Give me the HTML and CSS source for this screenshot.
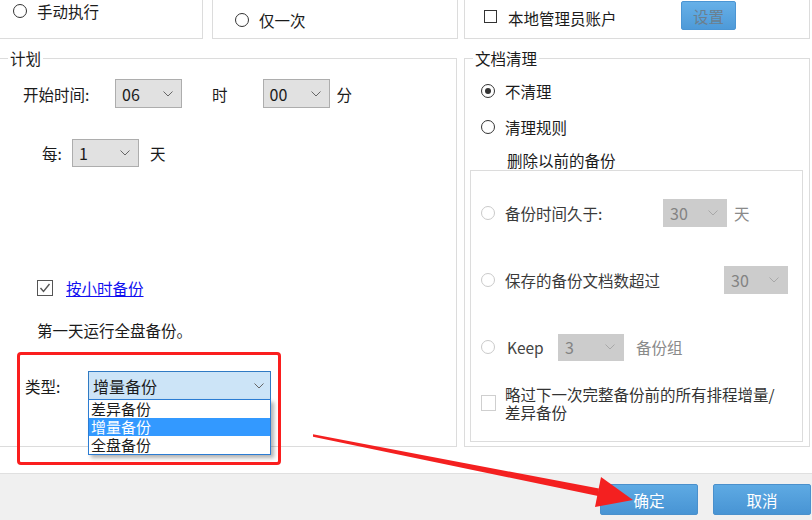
FILE: index.html
```html
<!DOCTYPE html>
<html lang="zh-CN">
  <head>
    <meta charset="UTF-8" />
    <title>计划备份设置</title>
    <link rel="stylesheet" href="styles.css">
  </head>
  <body>
    <!-- 上面一排: 执行方式 / 账户 -->
    <div class="top-row">
      <div class="box box-run">
        <div class="opt"><span class="radio"></span><span class="opt-text">手动执行</span></div>
      </div>
      <div class="box box-once">
        <div class="opt"><span class="radio"></span><span class="opt-text">仅一次</span></div>
      </div>
      <div class="box box-account">
        <span class="check"></span>
        <span class="account-text">本地管理员账户</span>
        <button class="btn-set">设置</button>
      </div>
    </div>

    <div class="main-row">
      <!-- 计划 -->
      <fieldset class="group plan">
        <legend>计划</legend>
        <div class="row row-start">
          <span class="lbl-start">开始时间:</span>
          <div class="select"><span>06</span><svg class="chev" width="10" height="6" viewBox="0 0 10 6"><polyline points="0.5,0.5 5,5 9.5,0.5" /></svg></div>
          <span class="unit-hour">时</span>
          <div class="select sel-min"><span>00</span><svg class="chev" width="10" height="6" viewBox="0 0 10 6"><polyline points="0.5,0.5 5,5 9.5,0.5" /></svg></div>
          <span class="unit-min">分</span>
        </div>
        <div class="row row-every">
          <span class="lbl-every">每:</span>
          <div class="select sel-every"><span>1</span><svg class="chev" width="10" height="6" viewBox="0 0 10 6"><polyline points="0.5,0.5 5,5 9.5,0.5" /></svg></div>
          <span class="unit-day">天</span>
        </div>
        <div class="row row-hourly">
          <span class="check check-on"><svg width="14" height="14" viewBox="0 0 14 14"><polyline points="2.5,7 5.5,10.5 11.5,3" /></svg></span>
          <a class="hourly-link" href="#">按小时备份</a>
        </div>
        <div class="row row-note">第一天运行全盘备份。</div>
        <div class="row row-type">
          <span class="lbl-type">类型:</span>
          <div class="type-wrap">
            <div class="select sel-type"><span>增量备份</span><svg class="chev" width="10" height="6" viewBox="0 0 10 6"><polyline points="0.5,0.5 5,5 9.5,0.5" /></svg></div>
            <ul class="dropdown">
              <li>差异备份</li>
              <li class="active">增量备份</li>
              <li>全盘备份</li>
            </ul>
          </div>
        </div>
      </fieldset>

      <!-- 文档清理 -->
      <fieldset class="group cleanup">
        <legend>文档清理</legend>
        <div class="row row-keepall"><span class="radio radio-on"></span><span class="opt-text">不清理</span></div>
        <div class="row row-rule"><span class="radio"></span><span class="opt-text">清理规则</span></div>
        <div class="row row-desc">删除以前的备份</div>
        <div class="rule-box">
          <div class="row rule rule-age">
            <span class="radio radio-off"></span>
            <span class="rule-text age-text">备份时间久于:</span>
            <div class="select select-off"><span>30</span><svg class="chev" width="10" height="6" viewBox="0 0 10 6"><polyline points="0.5,0.5 5,5 9.5,0.5" /></svg></div>
            <span class="unit-off">天</span>
          </div>
          <div class="row rule rule-count">
            <span class="radio radio-off"></span>
            <span class="rule-text count-text">保存的备份文档数超过</span>
            <div class="select select-off"><span>30</span><svg class="chev" width="10" height="6" viewBox="0 0 10 6"><polyline points="0.5,0.5 5,5 9.5,0.5" /></svg></div>
          </div>
          <div class="row rule rule-keep">
            <span class="radio radio-off"></span>
            <span class="rule-text keep-text">Keep</span>
            <div class="select select-off sel-keep"><span>3</span><svg class="chev" width="10" height="6" viewBox="0 0 10 6"><polyline points="0.5,0.5 5,5 9.5,0.5" /></svg></div>
            <span class="unit-off unit-group">备份组</span>
          </div>
          <div class="row rule rule-skip">
            <span class="check check-off"></span>
            <span class="skip-text">略过下一次完整备份前的所有排程增量/<br>差异备份</span>
          </div>
        </div>
      </fieldset>
    </div>

    <div class="footer">
      <button class="btn">确定</button>
      <button class="btn">取消</button>
    </div>

    <!-- 标注: 红框和箭头 -->
    <div class="mark-box"></div>
    <svg class="mark-arrow" width="812" height="520" viewBox="0 0 812 520">
      <polygon points="313,434.3 313,436.8 598,496 599,488.5" />
      <polygon points="633,500 595,507 601,477" />
    </svg>
  </body>
</html>
```

FILE: styles.css
```css
* {
  box-sizing: border-box;
}

body {
  margin: 0;
  width: 812px;
  height: 520px;
  overflow: hidden;
  position: relative;
  background: #fff;
  font-family: "Noto Sans CJK SC", "Noto Sans", sans-serif;
  font-size: 15.5px;
  line-height: 20px;
  color: #1b1b1b;
}

/* Top boxes */
.top-row {
  display: flex;
  margin-top: -20px;
  height: 59px;
}

.box {
  border: 1px solid #dcdcdc;
  height: 59px;
}

.box-run {
  margin-left: -1px;
  width: 204px;
  padding: 20px 0 0 13px;
}

.box-once {
  margin-left: 9px;
  width: 246px;
  padding: 29px 0 0 22px;
}

.box-account {
  margin-left: 6px;
  width: 346px;
  padding: 20px 0 0 19px;
  display: flex;
  align-items: flex-start;
}

.box-account .check {
  margin-top: 9px;
}

.account-text {
  width: 173px;
  margin-left: 11px;
  margin-top: 7px;
}

.opt {
  display: flex;
  align-items: center;
  height: 20px;
}

.opt-text {
  margin-left: 10px;
}

.btn-set {
  width: 55px;
  height: 29px;
  border: 1px solid #4b95d3;
  border-radius: 2px;
  background: linear-gradient(#66b0e8, #4e9ad8);
  color: #6b7f8f;
  font-family: inherit;
  font-size: 15.5px;
  padding: 0;
}

/* Radios and checks */
.radio {
  display: inline-block;
  width: 14px;
  height: 14px;
  border: 1px solid #333;
  border-radius: 50%;
  background: #fff;
  flex: none;
  position: relative;
}

.radio-on::after {
  content: "";
  position: absolute;
  left: 3px;
  top: 3px;
  width: 6px;
  height: 6px;
  border-radius: 50%;
  background: #333;
}

.radio-off {
  border-color: #cacaca;
}

.check {
  display: inline-block;
  width: 13px;
  height: 13px;
  border: 1px solid #333;
  background: #fff;
  flex: none;
}

.check-on {
  width: 16px;
  height: 16px;
  border-color: #555;
}

.check-on svg {
  display: block;
  fill: none;
  stroke: #555;
  stroke-width: 1.4;
}

.check-off {
  width: 15px;
  height: 16px;
  border-color: #cfcfcf;
}

/* Groups */
.main-row {
  display: flex;
  margin-top: 9px;
}

.group {
  margin: 0;
  padding: 0;
  border: 1px solid #dcdcdc;
  height: 399px;
  min-width: 0;
}

.group legend {
  margin-left: 8px;
  padding: 0 2px;
  line-height: 20px;
}

.plan {
  margin-left: -1px;
  width: 458px;
}

.cleanup {
  margin-left: 7px;
  width: 346px;
}

.row {
  display: flex;
  align-items: center;
}

/* Select boxes */
.select {
  display: flex;
  align-items: center;
  justify-content: space-between;
  width: 67px;
  height: 29px;
  padding: 0 8px 0 6px;
  border: 1px solid #adadad;
  background: #e1e1e1;
  font-size: 16px;
  flex: none;
}

.chev {
  fill: none;
  stroke: #666;
  stroke-width: 1;
}

/* 计划 */
.row-start {
  margin-top: 11px;
  height: 29px;
  padding-left: 23px;
}

.lbl-start {
  width: 92px;
}

.unit-hour {
  margin-left: 30px;
}

.sel-min {
  margin-left: 35px;
}

.unit-min {
  margin-left: 7px;
}

.row-every {
  margin-top: 31px;
  padding-left: 42px;
}

.lbl-every {
  width: 30px;
}

.sel-every {
  height: 28px;
}

.unit-day {
  margin-left: 11px;
}

.row-hourly {
  margin-top: 111px;
  height: 20px;
  padding-left: 37px;
}

.hourly-link {
  margin-left: 13px;
  color: #1010f0;
  text-decoration: underline;
}

.row-note {
  margin-top: 22px;
  padding-left: 37px;
  height: 20px;
}

.row-type {
  margin-top: 31px;
  padding-left: 25px;
}

.lbl-type {
  width: 63px;
}

.type-wrap {
  position: relative;
}

.sel-type {
  width: 183px;
  height: 29px;
  padding-left: 4px;
  padding-right: 6px;
  background: #cce4f7;
  border-color: #2f7ac3;
}

.dropdown {
  position: absolute;
  left: 0;
  top: 28px;
  width: 183px;
  margin: 0;
  padding: 0;
  list-style: none;
  background: #fff;
  border: 1px solid #2b7cd3;
  box-shadow: 3px 3px 4px rgba(0, 0, 0, 0.3);
  font-size: 15px;
  line-height: 18px;
  z-index: 5;
}

.dropdown li {
  height: 18px;
  padding-left: 2px;
}

.dropdown li.active {
  background: #3399ff;
  color: #fff;
}

/* 文档清理 */
.row-keepall {
  margin-top: 13px;
  height: 20px;
  padding-left: 16px;
}

.row-rule {
  margin-top: 16px;
  height: 20px;
  padding-left: 16px;
}

.row-desc {
  margin-top: 13px;
  height: 20px;
  padding-left: 42px;
}

.rule-box {
  margin-left: 5px;
  width: 333px;
  height: 272px;
  border: 1px solid #dcdcdc;
}

.rule {
  padding-left: 10px;
  height: 28px;
}

.rule-text {
  margin-left: 10px;
  color: #3a3a3a;
}

.age-text {
  width: 158px;
}

.count-text {
  width: 219px;
}

.keep-text {
  margin-left: 12px;
  width: 51px;
  color: #444;
}

.select-off {
  width: 64px;
  height: 28px;
  border-color: #cccccc;
  background: #cccccc;
  color: #838383;
}

.select-off .chev {
  stroke: #a8a8a8;
}

.sel-keep {
  width: 66px;
  height: 27px;
}

.unit-off {
  margin-left: 7px;
  color: #8a8a8a;
}

.unit-group {
  margin-left: 12px;
}

.rule-age {
  margin-top: 28px;
}

.rule-count {
  margin-top: 39px;
}

.rule-keep {
  margin-top: 39px;
}

.rule-skip {
  margin-top: 24px;
  height: 36px;
}

.skip-text {
  margin-left: 9px;
  line-height: 18px;
  color: #333;
}

/* Footer */
.footer {
  margin-top: 26px;
  height: 47px;
  background: #f0f0f0;
  border-top: 1px solid #e0e0e0;
  display: flex;
  justify-content: flex-end;
  gap: 15px;
  padding: 10px 1px 0 0;
}

.btn {
  width: 98px;
  height: 31px;
  border: 1px solid #4a90cc;
  border-radius: 2px;
  background: linear-gradient(#5eaae3, #4894d4);
  color: #fff;
  font-family: inherit;
  font-size: 15.5px;
  padding: 0;
}

/* Annotation */
.mark-box {
  position: absolute;
  left: 17px;
  top: 352px;
  width: 264px;
  height: 113px;
  border: 3px solid #fa1e1e;
  border-radius: 4px;
  z-index: 10;
}

.mark-arrow {
  position: absolute;
  left: 0;
  top: 0;
  z-index: 10;
  fill: #f42020;
}
```
